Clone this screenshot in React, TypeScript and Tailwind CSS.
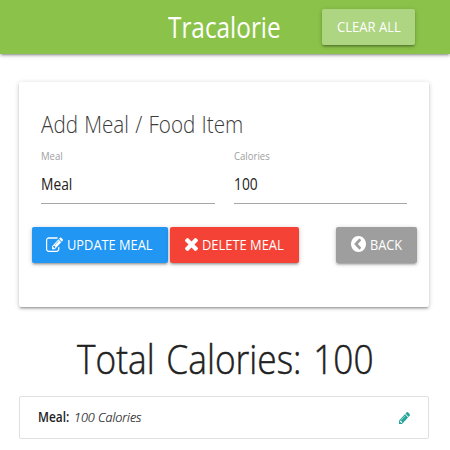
import type { ReactNode } from "react";

function Icon({ className, viewBox, d }: { className: string; viewBox: string; d: string }) {
  return (
    <svg className={`shrink-0 ${className}`} viewBox={viewBox} preserveAspectRatio="none" fill="currentColor" aria-hidden="true">
      <path d={d} />
    </svg>
  );
}

const EDIT =
  "M888 1184l116-116-152-152-116 116v56h96v96h56zm440-720q-16-16-33 1l-350 350q-17 17-1 33t33-1l350-350q17-17 1-33zm80 594v190q0 119-84.5 203.5t-203.5 84.5h-832q-119 0-203.5-84.5t-84.5-203.5v-832q0-119 84.5-203.5t203.5-84.5h832q63 0 117 25 15 7 18 23 3 17-9 29l-49 49q-14 14-32 8-23-6-45-6h-832q-66 0-113 47t-47 113v832q0 66 47 113t113 47h832q66 0 113-47t47-113v-126q0-13 9-22l64-64q15-15 35-7t20 29zm-96-738l288 288-672 672h-288v-288zm444 132l-92 92-288-288 92-92q28-28 68-28t68 28l152 152q28 28 28 68t-28 68z";
const TIMES =
  "M1490 1322q0 40-28 68l-136 136q-28 28-68 28t-68-28l-294-294-294 294q-28 28-68 28t-68-28l-136-136q-28-28-28-68t28-68l294-294-294-294q-28-28-28-68t28-68l136-136q28-28 68-28t68 28l294 294 294-294q28-28 68-28t68 28l136 136q28 28 28 68t-28 68l-294 294 294 294q28 28 28 68z";
const CHEVRON =
  "M1037 1395l102-102q19-19 19-45t-19-45l-307-307 307-307q19-19 19-45t-19-45l-102-102q-19-19-45-19t-45 19l-454 454q-19 19-19 45t19 45l454 454q19 19 45 19t45-19zm627-499q0 209-103 385.5t-279.5 279.5-385.5 103-385.5-103-279.5-279.5-103-385.5 103-385.5 279.5-279.5 385.5-103 385.5 103 279.5 279.5 103 385.5z";
const PENCIL =
  "M491 1536l91-91-235-235-91 91v107h128v128h107zm523-928q0-22-22-22-10 0-17 7l-542 542q-7 7-7 17 0 22 22 22 10 0 17-7l542-542q7-7 7-17zm-54-192l416 416-832 832h-416v-416zm683 96q0 53-37 90l-166 166-416-416 166-165q36-38 90-38 53 0 91 38l235 234q37 39 37 91z";

function Text({ className, children }: { className: string; children: ReactNode }) {
  return <span className={`block w-max origin-left whitespace-nowrap ${className}`}>{children}</span>;
}

function Button({ className, children }: { className: string; children: ReactNode }) {
  return (
    <button
      className={`flex h-9 shrink-0 items-center rounded-[2px] text-[14.5px] text-white shadow-[0_2px_2px_0_rgba(0,0,0,0.14),0_3px_1px_-2px_rgba(0,0,0,0.12),0_1px_5px_0_rgba(0,0,0,0.2)] ${className}`}
    >
      {children}
    </button>
  );
}

function Field({ label, value }: { label: string; value: string }) {
  return (
    <div className="h-[56px] border-b border-[#a6a6a6]">
      <Text className="h-[15px] scale-x-[0.87] text-[11px] leading-[15px] text-[#9e9e9e]">{label}</Text>
      <Text className="mt-[11px] scale-x-[0.89] text-[15.5px] leading-[20px]">{value}</Text>
    </div>
  );
}

export default function App() {
  return (
    <div className="h-[450px] w-[450px] overflow-hidden bg-white font-['Open_Sans',sans-serif] text-[#212121]">
      <header className="flex h-[54px] items-center bg-[#8bc34a] pr-[35px] pl-[168px] text-white shadow-[0_2px_2px_0_rgba(0,0,0,0.14),0_3px_1px_-2px_rgba(0,0,0,0.12),0_1px_5px_0_rgba(0,0,0,0.2)]">
        <h1 className="w-[154px]">
          <Text className="scale-x-[0.84] text-[29px] leading-[54px]">Tracalorie</Text>
        </h1>
        <Button className="w-[93px] bg-[#aed581] pl-[15px]">
          <Text className="scale-x-[0.9]">CLEAR ALL</Text>
        </Button>
      </header>

      <main className="px-[19px] pt-[28px]">
        <section className="h-[225px] w-[410px] rounded-[2px] pt-[25px] shadow-[0_2px_2px_0_rgba(0,0,0,0.14),0_3px_1px_-2px_rgba(0,0,0,0.12),0_1px_5px_0_rgba(0,0,0,0.2)]">
          <h2 className="px-[22px]">
            <Text className="scale-x-[0.843] text-[24.5px] leading-[34px] font-light text-[#3c3c3c] [word-spacing:1px]">Add Meal / Food Item</Text>
          </h2>
          <div className="mt-[7px] grid grid-cols-[174px_173px] gap-[19px] pl-[22px]">
            <Field label="Meal" value="Meal" />
            <Field label="Calories" value="100" />
          </div>
          <div className="mt-[23px] flex pl-[13px]">
            <Button className="w-[136px] gap-[4px] bg-[#2196f3] pl-[14px]">
              <Icon className="mb-[2px] h-[15px] w-[17px]" viewBox="0 100 1792 1436" d={EDIT} />
              <Text className="scale-x-[0.885]">UPDATE MEAL</Text>
            </Button>
            <Button className="ml-[2px] w-[129px] gap-[4px] bg-[#f44336] pl-[15px]">
              <Icon className="mb-[1px] h-[13px] w-[13px]" viewBox="302 366 1188 1188" d={TIMES} />
              <Text className="scale-x-[0.89]">DELETE MEAL</Text>
            </Button>
            <Button className="ml-[37px] w-[81px] gap-[4px] bg-[#9e9e9e] pl-[15px]">
              <Icon className="mb-[2px] h-[16px] w-[15px]" viewBox="128 128 1536 1536" d={CHEVRON} />
              <Text className="scale-x-[0.88]">BACK</Text>
            </Button>
          </div>
        </section>

        <h3 className="mt-[28px] pl-[58px]">
          <Text className="scale-x-[0.86] text-[41px] leading-[46px] font-light [-webkit-text-stroke:0.5px_#212121] [word-spacing:3px]">Total Calories: 100</Text>
        </h3>

        <ul className="mt-[15px] w-[410px] rounded-[2px] border border-[#e0e0e0]">
          <li className="flex h-[41px] items-center justify-between pr-[18px] pl-[18px] text-[13.5px]">
            <div className="flex">
              <strong className="w-[36px] font-semibold">
                <Text className="scale-x-[0.88]">Meal:</Text>
              </strong>
              <em>
                <Text className="scale-x-[0.93] font-light [-webkit-text-stroke:0.2px_#212121]">100 Calories</Text>
              </em>
            </div>
            <Icon className="h-[12px] w-[11px] text-[#26a69a]" viewBox="128 149 1515 1515" d={PENCIL} />
          </li>
        </ul>
      </main>
    </div>
  );
}
